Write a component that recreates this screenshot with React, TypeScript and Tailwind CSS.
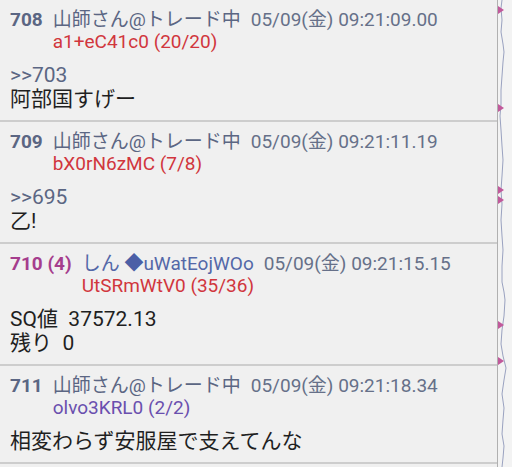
import React from "react";

type Post = {
  no: string;
  count?: string;
  name: React.ReactNode;
  date: string;
  id: string;
  idColor: string;
  body: React.ReactNode[];
};

const POSTS: Post[] = [
  {
    no: "708",
    name: "山師さん@トレード中",
    date: "05/09(金) 09:21:09.00",
    id: "a1+eC41c0 (20/20)",
    idColor: "text-[#d1363d]",
    body: [<span className="text-[#5b6683]">&gt;&gt;703</span>, "阿部国すげー"],
  },
  {
    no: "709",
    name: "山師さん@トレード中",
    date: "05/09(金) 09:21:11.19",
    id: "bX0rN6zMC (7/8)",
    idColor: "text-[#d1363d]",
    body: [<span className="text-[#5b6683]">&gt;&gt;695</span>, "乙!"],
  },
  {
    no: "710",
    count: "(4)",
    name: (
      <span className="text-[#5468a8]">
        しん <span className="text-[#4b5fa6]">◆</span>uWatEojWOo
      </span>
    ),
    date: "05/09(金) 09:21:15.15",
    id: "UtSRmWtV0 (35/36)",
    idColor: "text-[#d1363d]",
    body: ["SQ値  37572.13", "残り  0"],
  },
  {
    no: "711",
    name: "山師さん@トレード中",
    date: "05/09(金) 09:21:18.34",
    id: "olvo3KRL0 (2/2)",
    idColor: "text-[#6a4fae]",
    body: ["相変わらず安服屋で支えてんな"],
  },
];

function PostItem({ post }: { post: Post }) {
  const hot = !!post.count;
  return (
    <div className="border-b-2 border-[#cdcdcd] pt-[9px] pb-[9px] pl-[10px] pr-2">
      {/* Header */}
      <div className="flex gap-[10px] text-[19px] leading-[22px]">
        <span className={`font-bold ${hot ? "text-[#a53d8d]" : "text-[#5b6683]"}`}>
          {post.no}
          {post.count && <span> {post.count}</span>}
        </span>
        <div>
          <div className="flex gap-[10px] whitespace-nowrap text-[#5b6683]">
            <span>{post.name}</span>
            <span className="text-[#667089]">{post.date}</span>
          </div>
          <div className={post.idColor}>{post.id}</div>
        </div>
      </div>

      {/* Body */}
      <div className="mt-[10px] whitespace-pre text-[21px] leading-[24px] text-[#1f1f1f]">
        {post.body.map((line, i) => (
          <div key={i}>{line}</div>
        ))}
      </div>
    </div>
  );
}

const MARKS = [10, 108, 190, 200, 325, 361];

function ScrollTrack() {
  return (
    <svg width="14" height="467" viewBox="0 0 14 467" className="block">
      <polyline
        fill="none"
        stroke="#9aa2c0"
        strokeWidth="1"
        points="4,0 3,8 4,20 3,32 5,44 6,52 5,62 4,76 3,90 3,104 2,116 3,130 4,146 5,160 4,176 3,190 4,204 3,220 4,236 5,250 4,266 4,282 6,292 7,300 6,316 4,330 3,344 5,356 8,368 6,380 4,394 6,408 5,420 4,434 6,446 5,458 4,467"
      />
      {MARKS.map((y) => (
        <polygon key={y} points={`0,${y - 4} 6,${y} 0,${y + 4}`} fill="#c1599b" />
      ))}
    </svg>
  );
}

export default function App() {
  return (
    <div className="flex h-[467px] w-[512px] overflow-hidden bg-[#f0f0f0] font-['Roboto','Noto_Sans_CJK_JP',sans-serif]">
      <div className="w-[498px] shrink-0 border-r border-[#b0b0b0]">
        {POSTS.map((p) => (
          <PostItem key={p.no} post={p} />
        ))}
      </div>
      <div className="flex-1 bg-[#f3f3f3]">
        <ScrollTrack />
      </div>
    </div>
  );
}
